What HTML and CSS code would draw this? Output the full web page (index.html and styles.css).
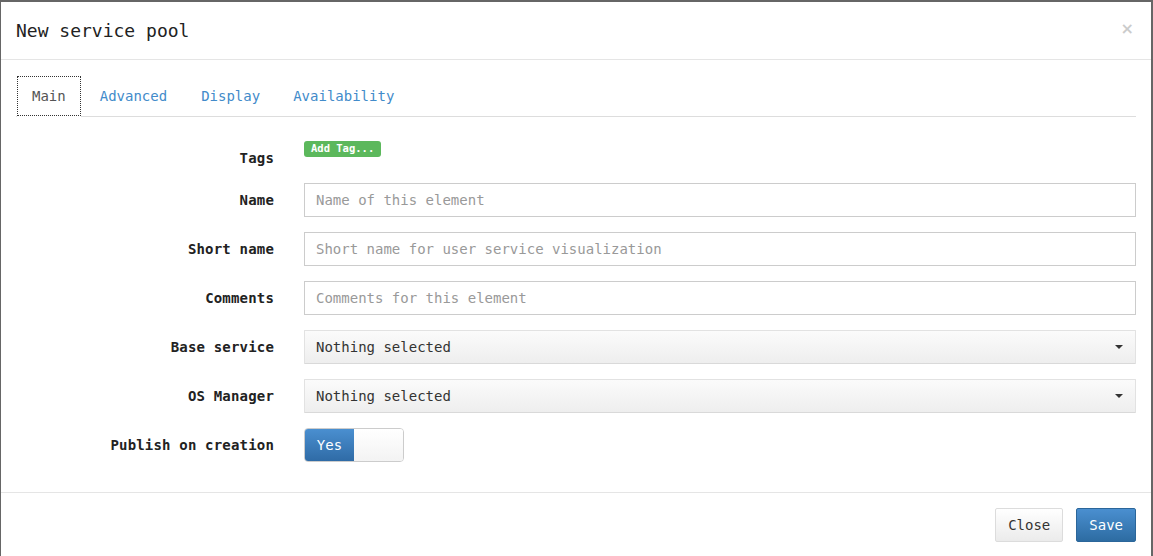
FILE: index.html
```html
<!DOCTYPE html>
<html>
<head>
<meta charset="utf-8">
<link rel="stylesheet" href="styles.css">
</head>
<body>
<div class="modal">
  <div class="modal-header">
    <h4 class="modal-title">New service pool</h4>
    <button class="close" type="button">×</button>
  </div>
  <div class="modal-body">
    <ul class="nav-tabs">
      <li class="active"><a>Main</a></li>
      <li><a>Advanced</a></li>
      <li><a>Display</a></li>
      <li><a>Availability</a></li>
    </ul>
    <form class="tab-pane">
      <div class="form-group tags-row">
        <label class="control-label">Tags</label>
        <div class="control"><span class="tag-label">Add Tag...</span></div>
      </div>
      <div class="form-group">
        <label class="control-label">Name</label>
        <div class="control"><input class="form-control" type="text" placeholder="Name of this element"></div>
      </div>
      <div class="form-group">
        <label class="control-label">Short name</label>
        <div class="control"><input class="form-control" type="text" placeholder="Short name for user service visualization"></div>
      </div>
      <div class="form-group">
        <label class="control-label">Comments</label>
        <div class="control"><input class="form-control" type="text" placeholder="Comments for this element"></div>
      </div>
      <div class="form-group">
        <label class="control-label">Base service</label>
        <div class="control"><div class="select-btn"><span>Nothing selected</span><span class="caret"></span></div></div>
      </div>
      <div class="form-group">
        <label class="control-label">OS Manager</label>
        <div class="control"><div class="select-btn"><span>Nothing selected</span><span class="caret"></span></div></div>
      </div>
      <div class="form-group">
        <label class="control-label">Publish on creation</label>
        <div class="control"><div class="switch"><span class="switch-on">Yes</span><span class="switch-off"></span></div></div>
      </div>
    </form>
  </div>
  <div class="modal-footer">
    <button class="btn btn-default" type="button">Close</button>
    <button class="btn btn-primary" type="button">Save</button>
  </div>
</div>
</body>
</html>
```

FILE: styles.css
```css
html, body {
  margin: 0;
  padding: 0;
  height: 100%;
  overflow: hidden;
}
body {
  background: #666666;
  font-family: "DejaVu Sans Mono", monospace;
  font-size: 14px;
  line-height: 20px;
  color: #333333;
}
.modal {
  margin: 2px 2px 0 1px;
  width: 1150px;
  background: #ffffff;
}
.modal-header {
  display: flex;
  justify-content: space-between;
  align-items: flex-start;
  padding: 16px 15px 15px 15px;
  border-bottom: 1px solid #e5e5e5;
}
.modal-title {
  margin: 0;
  font-size: 18px;
  line-height: 26px;
  font-weight: normal;
  color: #222222;
}
.close {
  border: 0;
  background: transparent;
  padding: 0;
  margin-top: 1px;
  margin-right: 2px;
  font-family: "DejaVu Sans", sans-serif;
  font-size: 16px;
  line-height: 20px;
  font-weight: bold;
  color: #000000;
  opacity: 0.2;
}
.modal-body {
  padding: 16px 15px 15px 15px;
}
.nav-tabs {
  display: flex;
  list-style: none;
  margin: 0;
  padding: 0;
  border-bottom: 1px solid #dddddd;
}
.nav-tabs li {
  margin-right: 2px;
}
.nav-tabs a {
  display: block;
  padding: 9px 15px 10px 15px;
  line-height: 20px;
  border: 1px solid transparent;
  border-bottom: 0;
  color: #428bca;
  font-size: 14px;
}
.nav-tabs li:first-child a {
  margin-left: 1px;
  margin-right: 1px;
  padding-left: 14px;
  padding-right: 14px;
}
.nav-tabs li:last-child a {
  padding-left: 14px;
}
.nav-tabs .active a {
  color: #555555;
  border: 1px dotted #333333;
  padding-bottom: 9px;
  background: #ffffff;
  box-shadow: 0 1px 0 #ffffff;
}
.tab-pane {
  padding-top: 24px;
}
.form-group {
  display: grid;
  grid-template-columns: 258px 1fr;
  column-gap: 30px;
  margin-bottom: 15px;
}
.control-label {
  padding-top: 7px;
  text-align: right;
  font-weight: bold;
  letter-spacing: 0.18px;
  line-height: 20px;
  color: #222222;
}
.tag-label {
  display: inline-block;
  background: #5cb85c;
  color: #ffffff;
  font-size: 10.5px;
  font-weight: bold;
  line-height: 1;
  padding: 2px 7px 3px 7px;
  border-radius: 3px;
  vertical-align: top;
}
.form-control {
  display: block;
  box-sizing: border-box;
  width: 100%;
  height: 34px;
  padding: 6px 11px;
  border: 1px solid #cccccc;
  border-radius: 0;
  font-family: "DejaVu Sans Mono", monospace;
  font-size: 14px;
  line-height: 20px;
  color: #555555;
  background: #ffffff;
  margin: 0;
}
.form-control::placeholder {
  color: #999999;
}
.select-btn {
  display: flex;
  justify-content: space-between;
  align-items: center;
  box-sizing: border-box;
  height: 34px;
  padding: 6px 12px 6px 11px;
  border: 1px solid #e2e2e2;
  border-bottom-color: #d9d9d9;
  border-radius: 1px;
  background: linear-gradient(to bottom, #fbfbfb 0%, #eeeeee 100%);
  color: #333333;
}
.caret {
  display: block;
  width: 0;
  height: 0;
  border-top: 4px solid #333333;
  border-left: 4px solid transparent;
  border-right: 4px solid transparent;
}
.switch {
  display: flex;
  box-sizing: border-box;
  width: 100px;
  height: 34px;
  border: 1px solid #cccccc;
  border-radius: 4px;
  overflow: hidden;
}
.switch-on {
  width: 49px;
  display: flex;
  align-items: center;
  justify-content: center;
  color: #ffffff;
  background: linear-gradient(to bottom, #4a8fd0 0%, #2f6ba6 100%);
}
.switch-off {
  flex: 1;
  background: linear-gradient(to bottom, #ffffff 0%, #f3f3f3 100%);
}
.modal-footer {
  display: flex;
  justify-content: flex-end;
  gap: 13px;
  padding: 15px;
  border-top: 1px solid #e5e5e5;
}
.btn {
  box-sizing: border-box;
  height: 34px;
  padding: 6px 12px;
  font-family: "DejaVu Sans Mono", monospace;
  font-size: 14px;
  line-height: 20px;
  border-radius: 2px;
  border: 1px solid;
  margin: 0;
}
.btn-default {
  color: #333333;
  border-color: #dcdcdc;
  background: linear-gradient(to bottom, #ffffff 0%, #ebebeb 100%);
}
.btn-primary {
  color: #ffffff;
  border-color: #2b669a;
  background: linear-gradient(to bottom, #4a8fd0 0%, #2d6ca2 100%);
}
```
